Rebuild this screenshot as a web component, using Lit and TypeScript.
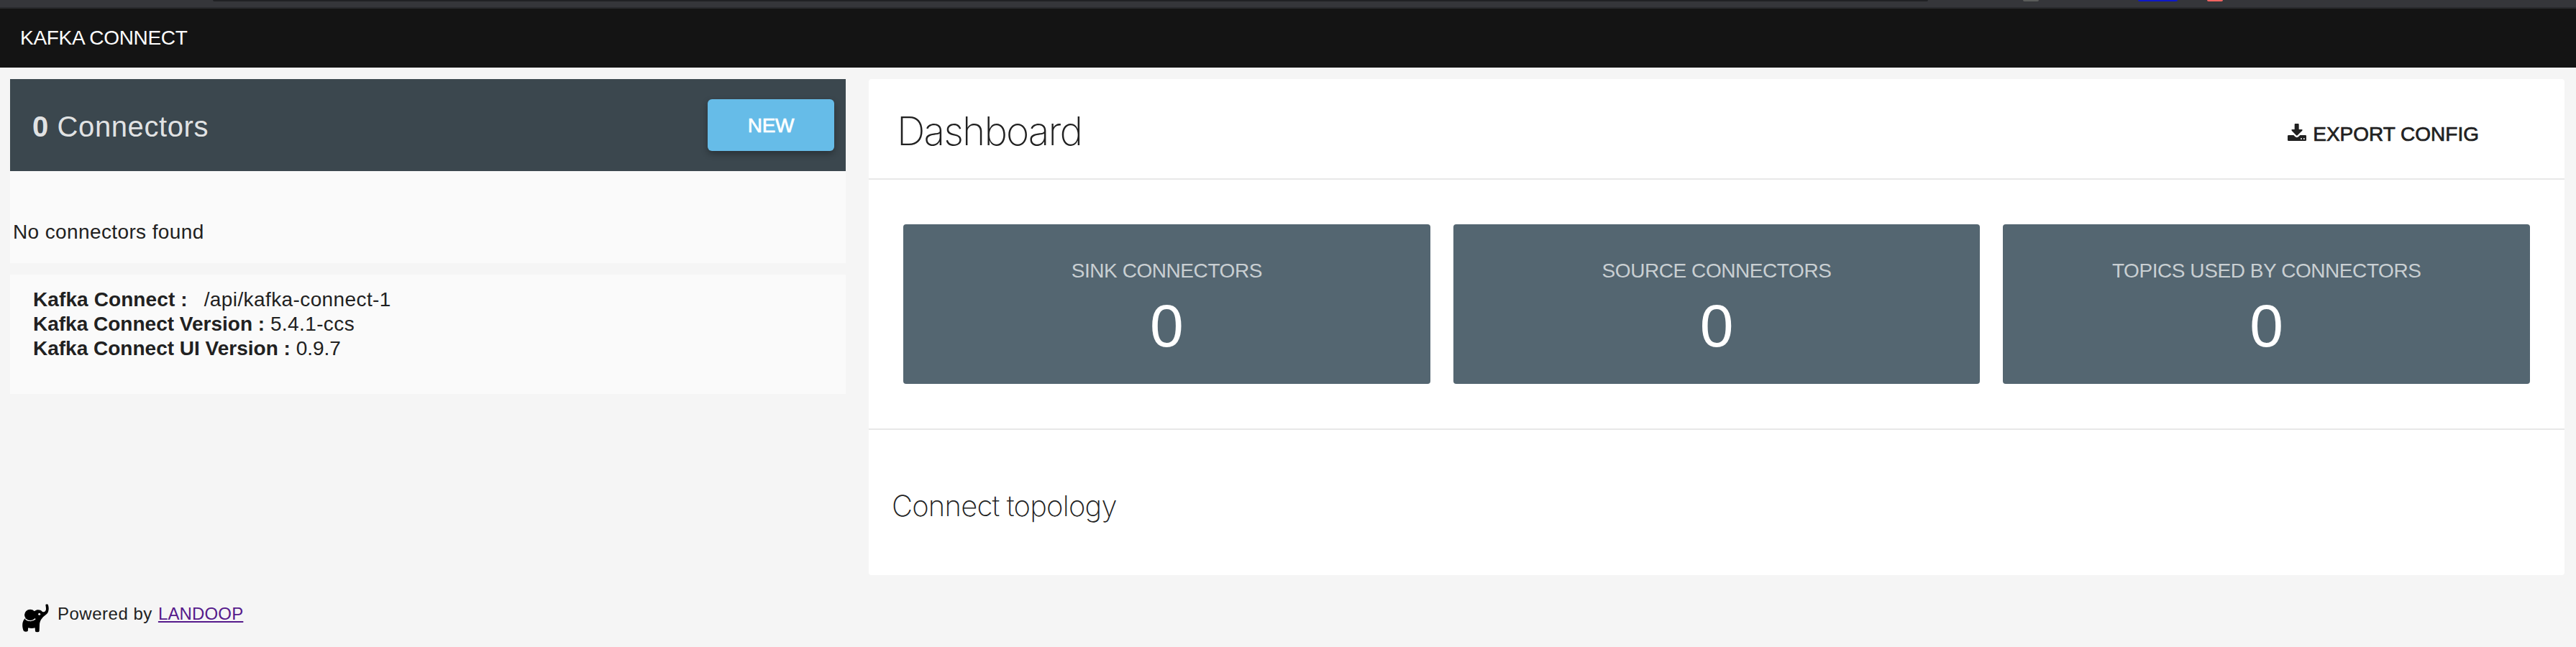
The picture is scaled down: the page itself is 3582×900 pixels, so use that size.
import { LitElement, html, css } from "lit";
import { customElement, property, state } from "lit/decorators.js";

@customElement("browser-edge")
class BrowserEdge extends LitElement {
  static styles = css`
    :host {
      display: flex;
      align-items: flex-start;
      box-sizing: border-box;
      height: 12px;
      background: #35363a;
      border-bottom: 2px solid #292a2d;
    }
    .omnibox {
      width: 2385px;
      height: 2px;
      margin-left: 296px;
      margin-right: 132px;
      background: #202124;
      border-radius: 0 0 8px 8px;
    }
    .ext {
      height: 2px;
      border-radius: 0 0 2px 2px;
    }
    .grey {
      width: 22px;
      margin-right: 138px;
      background: #5a5c5a;
    }
    .blue {
      width: 55px;
      margin-right: 41px;
      background: #0d18c6;
    }
    .red {
      width: 22px;
      background: #f26461;
    }
  `;

  render() {
    return html`
      <div class="omnibox"></div>
      <div class="ext grey"></div>
      <div class="ext blue"></div>
      <div class="ext red"></div>
    `;
  }
}

@customElement("stat-card")
class StatCard extends LitElement {
  @property() label = "";
  @property({ type: Number }) value = 0;

  static styles = css`
    :host {
      display: flex;
      flex-direction: column;
      align-items: center;
      gap: 14px;
      box-sizing: border-box;
      height: 222px;
      padding-top: 49px;
      border-radius: 4px;
      background: #546671;
    }
    .label {
      font-size: 28px;
      line-height: 31px;
      letter-spacing: -0.43px;
      color: rgba(255, 255, 255, 0.7);
    }
    .value {
      font-size: 84px;
      line-height: 94px;
      color: #fff;
    }
  `;

  render() {
    return html`
      <div class="label">${this.label}</div>
      <div class="value">${this.value}</div>
    `;
  }
}

@customElement("app-root")
class AppRoot extends LitElement {
  @state() private stats = [
    { label: "SINK CONNECTORS", value: 0 },
    { label: "SOURCE CONNECTORS", value: 0 },
    { label: "TOPICS USED BY CONNECTORS", value: 0 },
  ];

  static styles = css`
    :host {
      display: flex;
      flex-direction: column;
      box-sizing: border-box;
      height: 900px;
      overflow: hidden;
      background: #f5f5f5;
      color: #212121;
      font-family: "Liberation Sans", Arial, sans-serif;
      font-size: 28px;
      line-height: 31px;
      white-space: nowrap;
    }
    .topbar {
      box-sizing: border-box;
      height: 82px;
      padding: 25px 28px 0;
      background: #141414;
      color: #fff;
      letter-spacing: -0.3px;
    }
    .columns {
      display: grid;
      grid-template-columns: 1162px 1fr;
      gap: 32px;
      align-items: start;
      padding: 16px 16px 0 14px;
    }
    .side-head {
      display: flex;
      justify-content: space-between;
      align-items: flex-start;
      box-sizing: border-box;
      height: 128px;
      padding: 28px 16px 0 31px;
      background: #3b474e;
    }
    .count {
      padding-top: 16px;
      font-size: 40px;
      line-height: 44px;
      letter-spacing: 0.6px;
      color: rgba(255, 255, 255, 0.87);
    }
    .new {
      box-sizing: border-box;
      width: 176px;
      height: 72px;
      margin: 0;
      padding: 21px 0 20px;
      border: 0;
      border-radius: 6px;
      background: #66bce8;
      box-shadow: 0 4px 10px rgba(0, 0, 0, 0.3);
      color: #fff;
      font: inherit;
      text-align: center;
      letter-spacing: -0.3px;
      -webkit-text-stroke: 0.7px currentColor;
    }
    .empty {
      box-sizing: border-box;
      height: 128px;
      padding: 69px 4px 0;
      background: #fafafa;
      letter-spacing: 0.38px;
    }
    .info {
      display: flex;
      flex-direction: column;
      gap: 3px;
      box-sizing: border-box;
      height: 166px;
      margin-top: 16px;
      padding: 19px 32px 0;
      background: #fafafa;
    }
    .endpoint {
      letter-spacing: 0.4px;
      margin-left: 23px;
    }
    .kc {
      letter-spacing: 0.1px;
    }
    .version {
      letter-spacing: 0.4px;
    }
    .main {
      box-sizing: border-box;
      height: 690px;
      border-radius: 4px;
      background: #fff;
    }
    .main-head {
      display: flex;
      justify-content: space-between;
      align-items: flex-start;
      box-sizing: border-box;
      height: 140px;
      padding: 39px 119px 0 39px;
      border-bottom: 2px solid #e8e8e8;
    }
    h1,
    h2 {
      margin: 0;
      font-family: Inter, "Liberation Sans", sans-serif;
    }
    h1 {
      font-size: 55px;
      line-height: 66px;
      font-weight: 150;
      letter-spacing: -1.9px;
    }
    .export {
      display: flex;
      align-items: flex-start;
      gap: 9px;
      padding-top: 22px;
      -webkit-text-stroke: 0.7px currentColor;
    }
    .export svg {
      display: block;
      margin-top: 1px;
    }
    .stats {
      display: grid;
      grid-template-columns: repeat(3, 1fr);
      gap: 32px;
      padding: 62px 48px;
      border-bottom: 2px solid #e8e8e8;
    }
    .topology {
      padding: 81px 32px 0;
    }
    h2 {
      font-size: 40px;
      line-height: 49px;
      font-weight: 150;
      letter-spacing: -0.8px;
    }
    .footer {
      display: flex;
      align-items: flex-start;
      padding: 40px 0 0 31px;
      font-size: 24px;
      line-height: 27px;
      letter-spacing: 0.5px;
    }
    .footer svg {
      display: block;
      margin-right: 12px;
    }
    .footer a {
      margin-left: 1px;
      color: #551a8b;
      letter-spacing: 0.15px;
      text-decoration: underline;
      text-decoration-thickness: 2px;
      text-underline-offset: 2px;
      text-decoration-skip-ink: none;
    }
  `;

  render() {
    return html`
      <browser-edge></browser-edge>
      <header class="topbar">KAFKA CONNECT</header>
      <div class="columns">
        <aside>
          <div class="side-head">
            <div class="count"><b>0</b> Connectors</div>
            <button class="new">NEW</button>
          </div>
          <div class="empty">No connectors found</div>
          <div class="info">
            <div><b class="kc">Kafka Connect :</b><span class="endpoint">/api/kafka-connect-1</span></div>
            <div><b>Kafka Connect Version :</b> <span class="version">5.4.1-ccs</span></div>
            <div><b>Kafka Connect UI Version :</b> 0.9.7</div>
          </div>
        </aside>
        <main class="main">
          <div class="main-head">
            <h1>Dashboard</h1>
            <div class="export">
              <svg width="26" height="24" viewBox="245 156 78 72" fill="#212121">
                <path d="M277 156h12q3 0 3 3v21h12q5 1 2 5l-20 20q-2.500 2-5 0l-19-20q-3-4 2-5h10v-21q0-3 3-3z" />
                <path
                  d="M249 204h21l7 7q6.500 5 13 0l7-7h22q4 0 4 4v16q0 4-4 4h-70q-4 0-4-4v-16q0-4 4-4z"
                />
                <circle cx="302" cy="219" r="2.900" fill="#fff" />
                <circle cx="313.500" cy="219" r="2.900" fill="#fff" />
              </svg>
              <span>EXPORT CONFIG</span>
            </div>
          </div>
          <div class="stats">
            ${this.stats.map((s) => html`<stat-card .label=${s.label} .value=${s.value}></stat-card>`)}
          </div>
          <div class="topology"><h2>Connect topology</h2></div>
        </main>
      </div>
      <footer class="footer">
        <svg width="37" height="40" viewBox="33 31 111 120">
          <path
            d="M84 62C94 53 108 55 116 63C124 68 132 62 132 53C132 46 131 40 130 36C130 32 140 31 141 36C145 50 143 62 138 70C132 78 120 82 115 92C108 100 105 110 105 120L104 145Q103 149 96 149Q87 149 87 145L86 131Q72 135 58 131Q56 137 57 143Q56 147 48 147Q39 147 38 143C31 125 32 104 43 93Z"
          />
          <path d="M46 92C54 102 76 104 87 93" fill="none" stroke="#f5f5f5" stroke-width="6" />
          <ellipse cx="66" cy="77" rx="24" ry="23" />
          <circle cx="104" cy="74" r="4.500" fill="#f5f5f5" />
        </svg>
        <span>Powered by&nbsp;</span><a>LANDOOP</a>
      </footer>
    `;
  }
}
